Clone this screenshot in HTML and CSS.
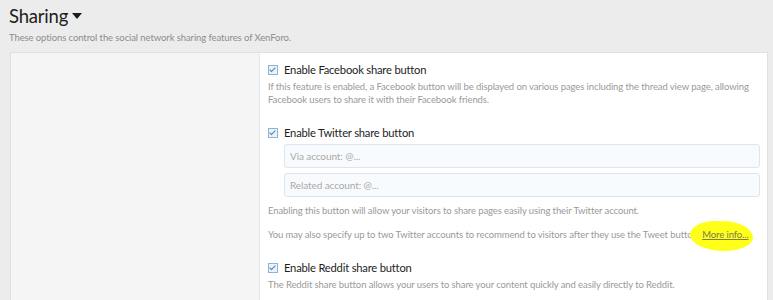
FILE: index.html
```html
<!DOCTYPE html>
<html lang="en">
<head>
    <meta charset="UTF-8">
    <title>Sharing options</title>
    <link rel="stylesheet" href="styles.css">
</head>
<body>
    <div class="block-header">
        <h2 class="block-title">Sharing <span class="caret"></span></h2>
        <div class="block-desc">These options control the social network sharing features of XenForo.</div>
    </div>

    <div class="form-block">
        <div class="form-label-col"></div>
        <div class="form-input-col">

            <div class="option">
                <label class="check-row"><span class="checkbox"></span>Enable Facebook share button</label>
                <div class="explain">If this feature is enabled, a Facebook button will be displayed on various pages including the thread view page, allowing Facebook users to share it with their Facebook friends.</div>
            </div>

            <div class="option">
                <label class="check-row"><span class="checkbox"></span>Enable Twitter share button</label>
                <div class="dependent">
                    <input class="input" type="text" placeholder="Via account: @...">
                    <input class="input" type="text" placeholder="Related account: @...">
                </div>
                <div class="explain">Enabling this button will allow your visitors to share pages easily using their Twitter account.</div>
                <div class="explain spaced">You may also specify up to two Twitter accounts to recommend to visitors after they use the Tweet button. <a class="more-link" href="#"><span class="marker"></span>More info...</a></div>
            </div>

            <div class="option">
                <label class="check-row"><span class="checkbox"></span>Enable Reddit share button</label>
                <div class="explain">The Reddit share button allows your users to share your content quickly and easily directly to Reddit.</div>
            </div>

        </div>
    </div>
</body>
</html>
```

FILE: styles.css
```css
body {
    margin: 0;
    background: #ececec;
    font-family: 'Lato', 'Noto Sans', sans-serif;
    color: #141414;
    overflow: hidden;
}

.block-header {
    padding: 3px 9px 0;
}

.block-title {
    margin: 0;
    font-size: 18.5px;
    letter-spacing: -0.2px;
    font-weight: normal;
    line-height: 26px;
    color: #1d1d1d;
}

.caret {
    display: inline-block;
    width: 0;
    height: 0;
    border-left: 5.5px solid transparent;
    border-right: 5.5px solid transparent;
    border-top: 6px solid #1d1d1d;
    vertical-align: middle;
    margin-left: -1px;
    position: relative;
    top: -2px;
}

.block-desc {
    font-size: 9.5px;
    letter-spacing: -0.1px;
    color: #8c8c8c;
    margin-top: 2px;
    line-height: 14px;
}

.form-block {
    display: flex;
    margin: 7px 5px 0 10px;
    border: 1px solid #e0e0e0;
    border-bottom: none;
    min-height: 260px;
}

.form-label-col {
    width: 248px;
    background: #f5f5f5;
    border-right: 1px solid #e6e6e6;
}

.form-input-col {
    flex: 1;
    background: #fff;
    padding: 9px 7px 0 8px;
}

.option {
    margin-bottom: 19px;
}

.check-row {
    display: flex;
    align-items: center;
    font-size: 11.2px;
    letter-spacing: -0.2px;
    line-height: 16px;
    color: #1d1d1d;
}

.checkbox {
    width: 8px;
    height: 8px;
    border: 1px solid #8fb3d6;
    background: #eaf2fa;
    margin-right: 6px;
    position: relative;
}

.checkbox::after {
    content: '';
    position: absolute;
    left: 2px;
    top: 0px;
    width: 2px;
    height: 5px;
    border: solid #4d7fb0;
    border-width: 0 1px 1px 0;
    transform: rotate(45deg);
}

.explain {
    font-size: 9.5px;
    letter-spacing: -0.1px;
    line-height: 13px;
    color: #9a9a9a;
    margin-top: 2px;
}

.explain.spaced {
    margin-top: 11px;
}

.dependent {
    display: flex;
    flex-direction: column;
    gap: 5px;
    margin: 3px 0 7px 16px;
}

.input {
    font-family: inherit;
    font-size: 10px;
    letter-spacing: -0.1px;
    height: 24px;
    box-sizing: border-box;
    padding: 0 5px;
    border: 1px solid #dde4eb;
    border-radius: 3px;
    background: #f8fbfd;
    color: #333;
}

.input::placeholder {
    color: #a9a9a9;
}

.more-link {
    position: relative;
    z-index: 0;
    color: #7c7c48;
    text-decoration: underline;
}

.marker {
    position: absolute;
    left: -12px;
    top: -8px;
    width: 63px;
    height: 30px;
    background: #ffff1a;
    border-radius: 40% 50% 45% 55% / 45% 55% 45% 55%;
    z-index: -1;
}
```
